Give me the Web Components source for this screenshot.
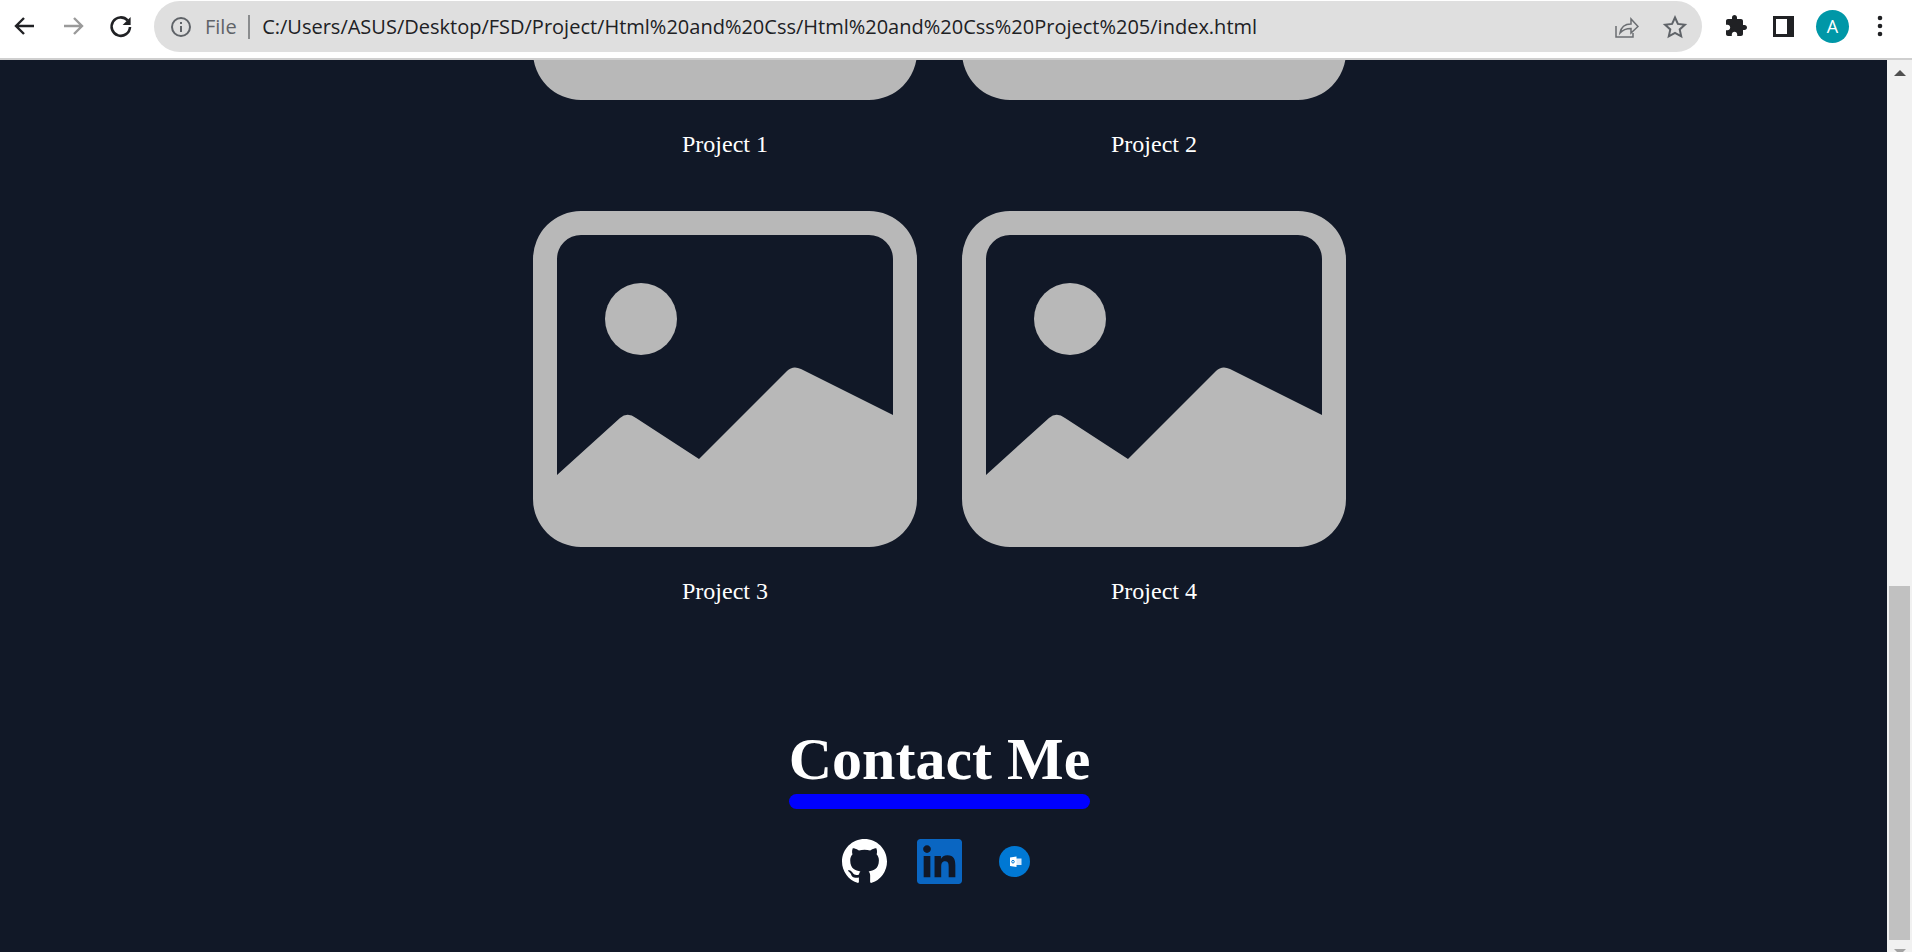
<!DOCTYPE html>
<html>
<head>
<meta charset="utf-8">
<title>Portfolio</title>
<style>
  html, body { margin: 0; height: 100%; overflow: hidden; background: #111827; }
</style>
</head>
<body>
<browser-shell>
  <browser-toolbar slot="toolbar" url="C:/Users/ASUS/Desktop/FSD/Project/Html%20and%20Css/Html%20and%20Css%20Project%205/index.html"></browser-toolbar>
  <project-grid>
    <project-card>Project 1</project-card>
    <project-card>Project 2</project-card>
    <project-card>Project 3</project-card>
    <project-card>Project 4</project-card>
  </project-grid>
  <contact-section>Contact Me</contact-section>
</browser-shell>

<script>
// Outer frame: toolbar on top, page and scrollbar below
class BrowserShell extends HTMLElement {
  constructor() {
    super();
    const shadow = this.attachShadow({ mode: "open" });
    shadow.innerHTML = `
    <style>
      :host { display: flex; flex-direction: column; height: 952px; overflow: hidden; }
      .view { flex: 1; display: flex; min-height: 0; background: #111827; }
      .page { flex: 1; min-width: 0; overflow: hidden; display: flex; flex-direction: column; align-items: center; padding-right: 8px; }
      .inner { margin-top: -296px; display: flex; flex-direction: column; align-items: center; }
    </style>
    <slot name="toolbar"></slot>
    <div class="view">
      <div class="page"><div class="inner"><slot></slot></div></div>
      <page-scrollbar></page-scrollbar>
    </div>
    `;
  }
}

class BrowserToolbar extends HTMLElement {
  constructor() {
    super();
    const shadow = this.attachShadow({ mode: "open" });
    shadow.innerHTML = `
    <style>
      :host { display: block; height: 60px; box-sizing: border-box; background: #fff; border-bottom: 2px solid #cfcfcf; flex: none; font-family: "Open Sans", "Noto Sans", sans-serif; }
      .bar { display: flex; align-items: flex-start; height: 58px; }
      .nav { display: flex; width: 154px; height: 52px; align-items: center; flex: none; padding-left: 9px; box-sizing: border-box; gap: 16px; }
      .nav svg { width: 32px; height: 32px; flex: none; }
      .omni { flex: none; width: 1548px; height: 51px; margin-top: 1px; background: #dfdfdf; border-radius: 26px; display: flex; align-items: center; box-sizing: border-box; padding-left: 16px; }
      .omni .info { width: 22px; height: 22px; flex: none; }
      .file { color: #5f6368; font-size: 20px; margin-left: 13px; }
      .sep { width: 2px; height: 24px; background: #8a8c8e; margin: 0 12.500px 0 11px; flex: none; }
      .url { color: #202124; font-size: 20px; white-space: nowrap; flex: 1; }
      .act { width: 26px; height: 26px; flex: none; }
      .share { margin-right: 23px; }
      .star { margin-right: 14px; }
      .tools { flex: 1; display: flex; height: 52px; align-items: center; }
      .tools svg { flex: none; }
      .avatar { width: 33px; height: 33px; border-radius: 50%; background: #0097a7; color: #fff; font-size: 18px; display: flex; align-items: center; justify-content: center; flex: none; }
    </style>
    <div class="bar">
      <div class="nav">
        <svg viewBox="0 0 32 32" fill="none" stroke="#202124" stroke-width="2.4"><path d="M25 16H7M15 8l-8 8 8 8"/></svg>
        <svg viewBox="0 0 32 32" fill="none" stroke="#9a9a9a" stroke-width="2.4"><path d="M7 16h18M17 8l8 8-8 8"/></svg>
        <svg viewBox="0 0 32 32" fill="none" stroke="#202124" stroke-width="2.6"><path d="M22.600 10.400A9.200 9.200 0 1 0 25 17"/><path d="M25.600 7v8h-8z" fill="#202124" stroke="none"/></svg>
      </div>
      <div class="omni">
        <svg class="info" viewBox="0 0 22 22" fill="none" stroke="#5f6368" stroke-width="2"><circle cx="11" cy="11" r="9"/><path d="M11 10v6M11 6v2"/></svg>
        <span class="file">File</span>
        <span class="sep"></span>
        <span class="url">${this.getAttribute("url")}</span>
        <svg class="act share" viewBox="0 0 26 26" fill="none" stroke="#6b6e72" stroke-width="1.500"><path d="M3 12v11h17v-4"/><path d="M7 19c1-6 5-9 11-9V5l7 7.500L18 19v-4.500c-5 0-8 1-11 4.500z"/></svg>
        <svg class="act star" viewBox="0 0 26 26" fill="none" stroke="#5f6368" stroke-width="2"><path d="M13 3.500l2.900 6.400 7 .8-5.200 4.700 1.500 6.900L13 18.800l-6.200 3.500 1.500-6.900-5.200-4.700 7-.8z"/></svg>
      </div>
      <div class="tools">
        <svg style="margin-left:22px" width="24" height="24" viewBox="0 0 24 24" fill="#202124"><path d="M20.500 11H19V7c0-1.100-.9-2-2-2h-4V3.500C13 2.120 11.880 1 10.500 1S8 2.120 8 3.500V5H4c-1.100 0-1.990.9-1.990 2v3.800H3.500c1.490 0 2.700 1.210 2.700 2.700s-1.210 2.700-2.700 2.700H2V20c0 1.100.9 2 2 2h3.800v-1.500c0-1.490 1.210-2.700 2.700-2.700 1.490 0 2.700 1.210 2.700 2.700V22H17c1.100 0 2-.9 2-2v-4h1.500c1.380 0 2.500-1.120 2.500-2.500S21.880 11 20.500 11z"/></svg>
        <svg style="margin-left:25px" width="21" height="21" viewBox="0 0 21 21"><path d="M0 0h21v21H0z" fill="#202124"/><path d="M3 3h11v15H3z" fill="#fff"/></svg>
        <div class="avatar" style="margin-left:22px">A</div>
        <svg style="margin-left:28px" width="6" height="22" viewBox="0 0 6 22" fill="#202124"><circle cx="3" cy="3" r="2.300"/><circle cx="3" cy="11" r="2.300"/><circle cx="3" cy="19" r="2.300"/></svg>
      </div>
    </div>
    `;
  }
}

class PageScrollbar extends HTMLElement {
  constructor() {
    super();
    const shadow = this.attachShadow({ mode: "open" });
    shadow.innerHTML = `
    <style>
      :host { display: flex; flex-direction: column; align-items: center; width: 25px; flex: none; background: #f1f1f1; }
      .up, .down { width: 0; height: 0; border-left: 6px solid transparent; border-right: 6px solid transparent; flex: none; }
      .up { border-bottom: 6px solid #505050; margin-top: 10px; }
      .thumb { width: 21px; height: 354px; background: #c1c1c1; margin-top: 510px; flex: none; }
      .down { border-top: 6px solid #a3a3a3; margin-top: 9px; }
    </style>
    <div class="up"></div>
    <div class="thumb"></div>
    <div class="down"></div>
    `;
  }
}

class ProjectGrid extends HTMLElement {
  constructor() {
    super();
    const shadow = this.attachShadow({ mode: "open" });
    shadow.innerHTML = `
    <style>
      :host { display: grid; grid-template-columns: 384px 384px; column-gap: 45px; row-gap: 53px; }
    </style>
    <slot></slot>
    `;
  }
}

class ProjectCard extends HTMLElement {
  constructor() {
    super();
    const shadow = this.attachShadow({ mode: "open" });
    shadow.innerHTML = `
    <style>
      :host { display: flex; flex-direction: column; align-items: center; gap: 30px; color: #fff; font: 24px "Liberation Serif", "Times New Roman", serif; }
      svg { display: block; width: 384px; height: 336px; }
      .name { line-height: 28px; }
    </style>
    <svg viewBox="0 0 384 336" fill="#b8b8b8">
      <path fill-rule="evenodd" d="M48 0H336A48 48 0 0 1 384 48V288A48 48 0 0 1 336 336H48A48 48 0 0 1 0 288V48A48 48 0 0 1 48 0ZM48 24A24 24 0 0 0 24 48V264L87 207Q94.400 200.600 103 207L166 248L254 160Q260 154 268 158L360 204V48A24 24 0 0 0 336 24Z"/>
      <circle cx="108" cy="108" r="36"/>
    </svg>
    <div class="name"><slot></slot></div>
    `;
  }
}

class ContactSection extends HTMLElement {
  constructor() {
    super();
    const shadow = this.attachShadow({ mode: "open" });
    shadow.innerHTML = `
    <style>
      :host { display: flex; flex-direction: column; align-items: center; margin-top: 119px; color: #fff; font-family: "Liberation Serif", "Times New Roman", serif; }
      h1 { margin: 0; font-size: 60px; font-weight: 700; line-height: 70px; }
      .rule { height: 15px; border-radius: 8px; background: #00f; width: 100%; }
      .links { display: flex; gap: 30px; margin-top: 30px; align-items: center; }
      .links svg { width: 45px; height: 45px; display: block; }
    </style>
    <div>
      <h1><slot></slot></h1>
      <div class="rule"></div>
    </div>
    <div class="links">
      <svg viewBox="0 0 16 16" fill="#fff"><path d="M8 0C3.580 0 0 3.580 0 8c0 3.540 2.290 6.530 5.470 7.590.4.070.55-.17.55-.38 0-.19-.01-.82-.01-1.490-2.010.37-2.530-.49-2.690-.94-.09-.23-.48-.94-.82-1.130-.28-.15-.68-.52-.01-.53.630-.01 1.080.58 1.230.82.720 1.210 1.870.87 2.330.66.070-.52.280-.87.510-1.070-1.780-.2-3.640-.89-3.640-3.950 0-.87.310-1.590.820-2.150-.08-.2-.36-1.020.08-2.120 0 0 .67-.21 2.200.82.640-.18 1.320-.27 2-.27s1.360.09 2 .27c1.530-1.040 2.200-.82 2.200-.82.440 1.100.160 1.920.08 2.120.510.560.820 1.270.820 2.150 0 3.070-1.870 3.750-3.650 3.950.290.250.540.730.540 1.480 0 1.070-.01 1.930-.01 2.200 0 .210.150.460.550.380A8.010 8.010 0 0 0 16 8c0-4.420-3.580-8-8-8z"/></svg>
      <svg viewBox="0 0 24 24" fill="#0a66c2"><path d="M20.447 20.452h-3.554v-5.569c0-1.328-.027-3.037-1.852-3.037-1.853 0-2.136 1.445-2.136 2.939v5.667H9.351V9h3.414v1.561h.046c.477-.9 1.637-1.850 3.370-1.850 3.601 0 4.267 2.370 4.267 5.455v6.286zM5.337 7.433c-1.144 0-2.063-.926-2.063-2.065 0-1.138.92-2.063 2.063-2.063 1.140 0 2.064.925 2.064 2.063 0 1.139-.925 2.065-2.064 2.065zm1.782 13.019H3.555V9h3.564v11.452zM22.225 0H1.771C.792 0 0 .774 0 1.729v20.542C0 23.227.792 24 1.771 24h20.451C23.200 24 24 23.227 24 22.271V1.729C24 .774 23.200 0 22.222 0h.003z"/></svg>
      <svg viewBox="0 0 45 45">
        <circle cx="22.500" cy="22.500" r="15.500" fill="#0078d4"/>
        <path d="M23 19.500h6.500V26H23z" fill="#dbeafa"/>
        <path d="M18 18.500l6.500-1v10.500l-6.500-1z" fill="#fff"/>
        <circle cx="21" cy="22.700" r="1.300" fill="none" stroke="#0078d4" stroke-width="1"/>
      </svg>
    </div>
    `;
  }
}

customElements.define("browser-shell", BrowserShell);
customElements.define("browser-toolbar", BrowserToolbar);
customElements.define("page-scrollbar", PageScrollbar);
customElements.define("project-grid", ProjectGrid);
customElements.define("project-card", ProjectCard);
customElements.define("contact-section", ContactSection);
</script>
</body>
</html>
